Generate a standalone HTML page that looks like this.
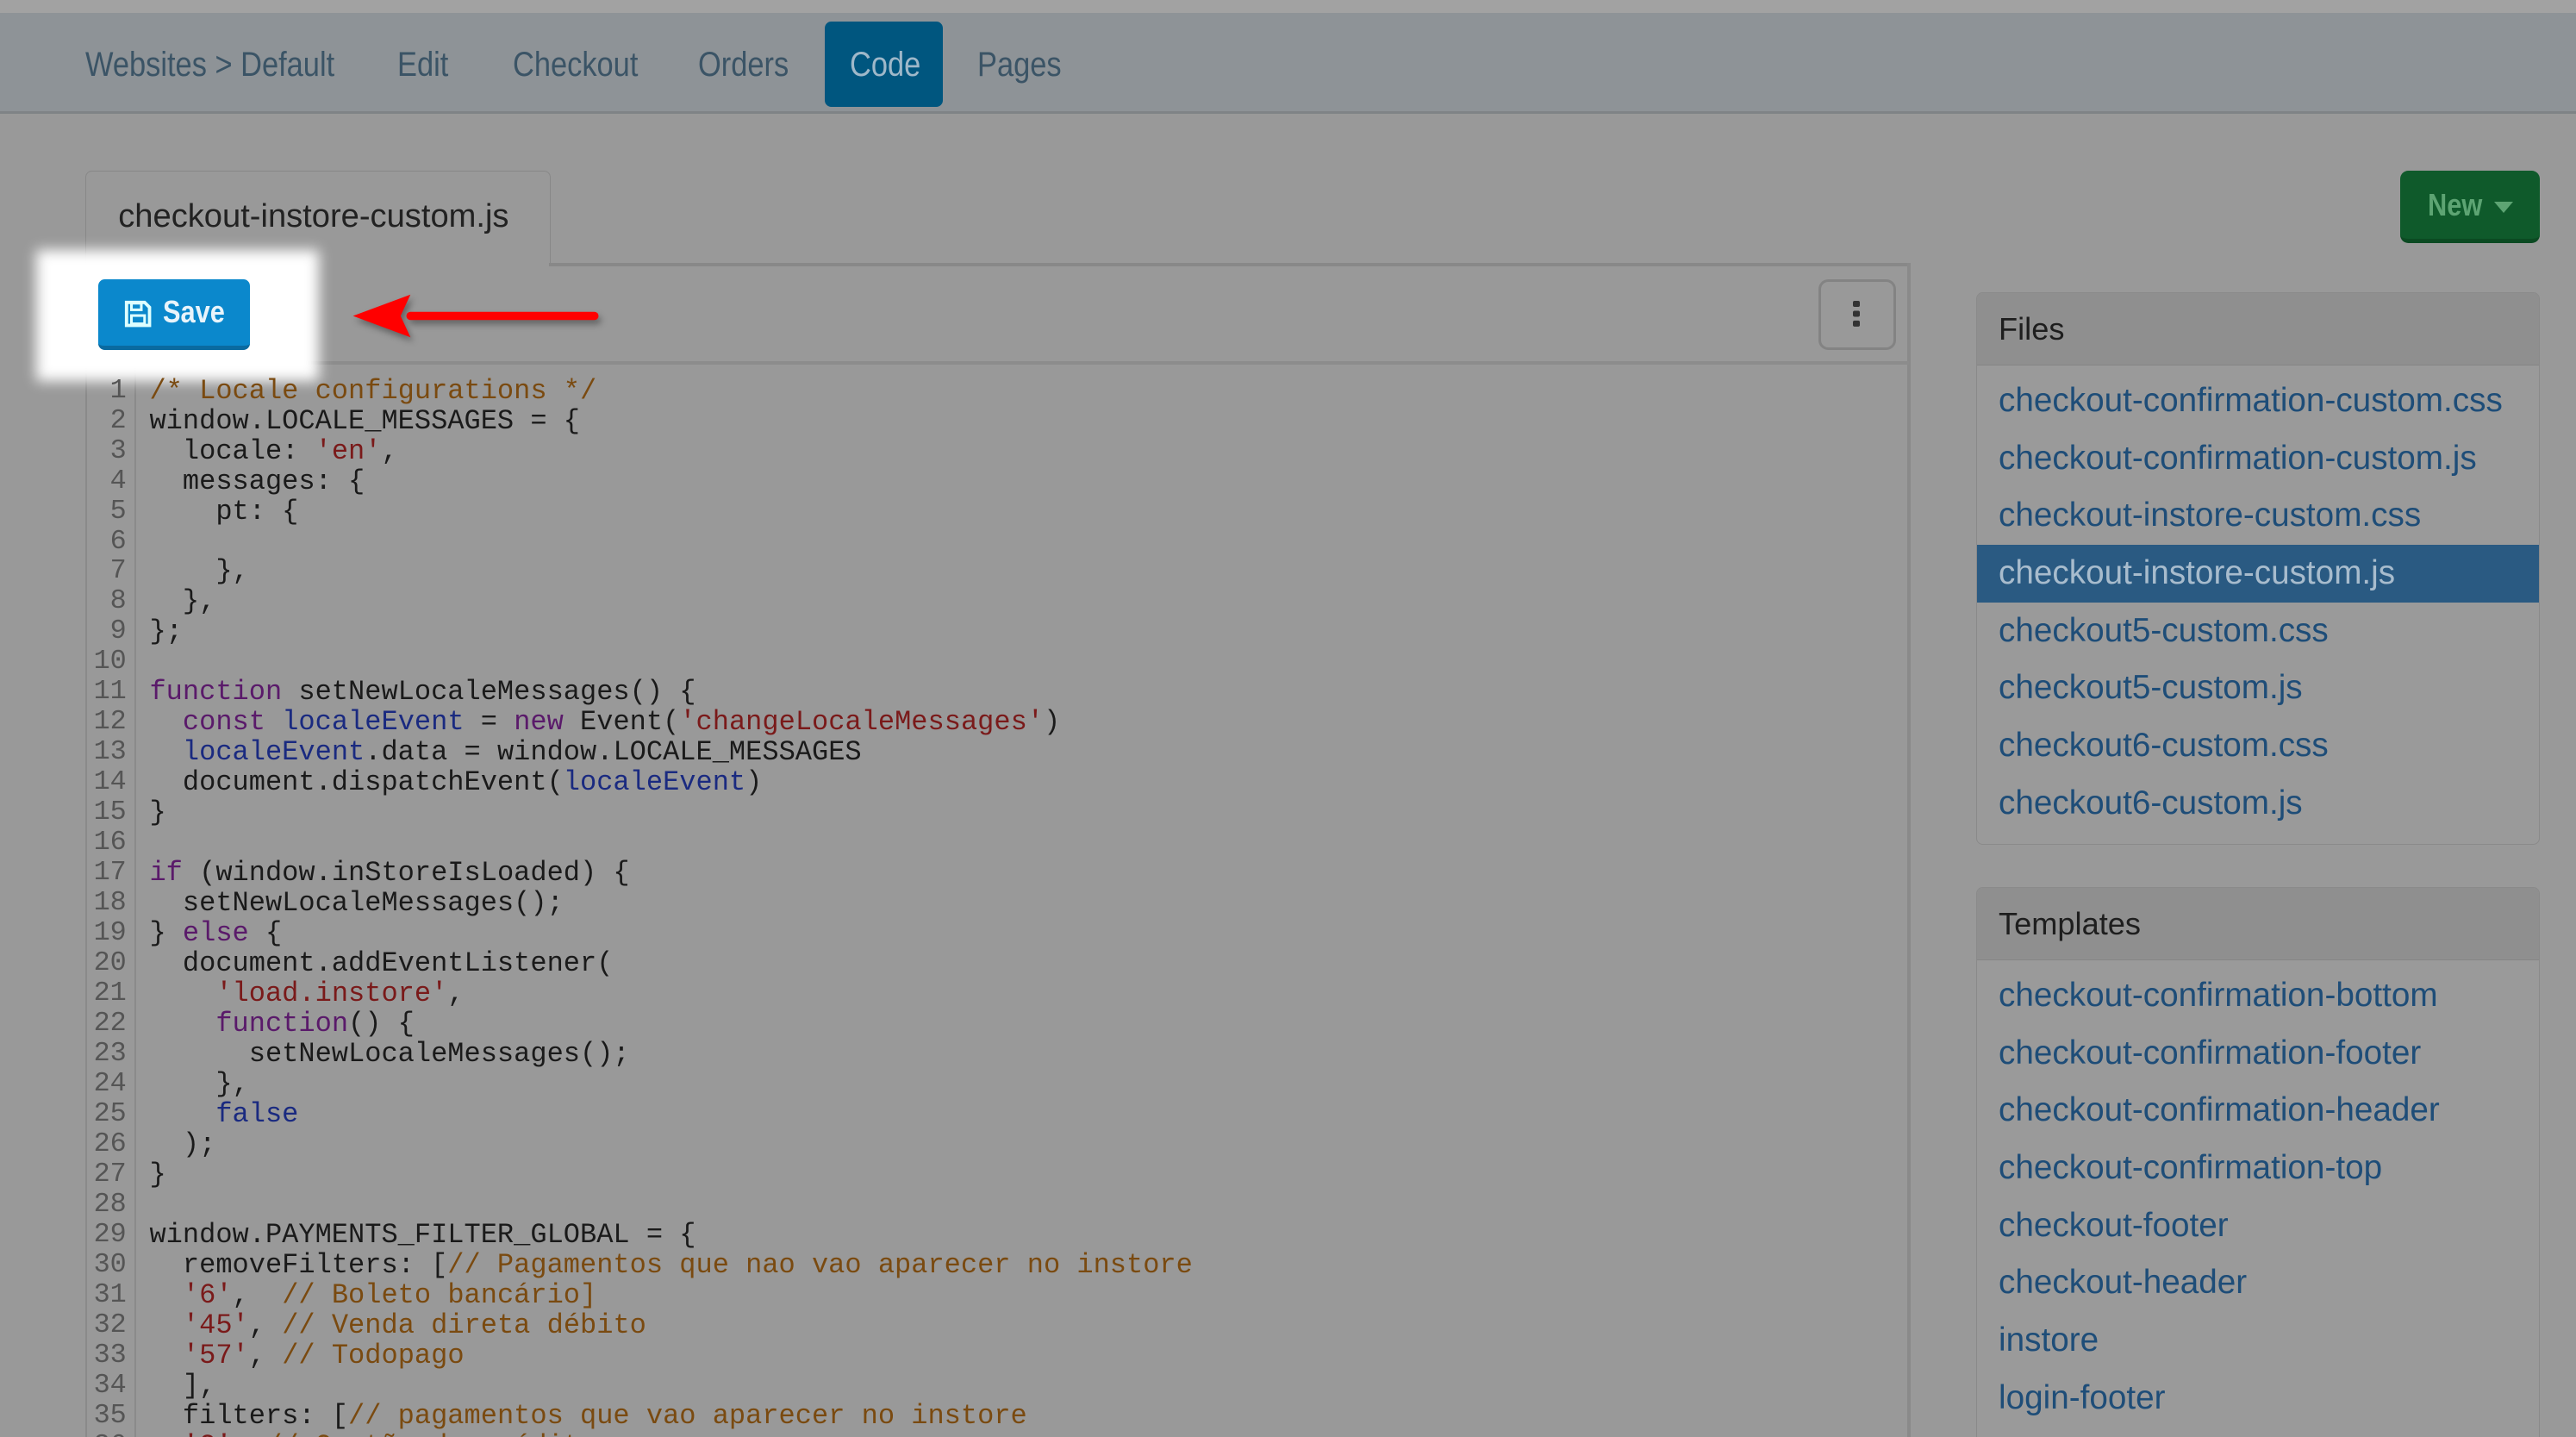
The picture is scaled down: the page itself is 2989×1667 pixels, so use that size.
<!DOCTYPE html>
<html><head><meta charset="utf-8">
<style>
*{margin:0;padding:0;box-sizing:border-box}
html,body{width:2989px;height:1667px;overflow:hidden;background:#999}
#w{zoom:1.90625;width:1568px;height:875px;position:relative;background:#999;font-family:"Liberation Sans",sans-serif;overflow:hidden}
.a{position:absolute}
.nav{left:0;top:8px;width:1568px;height:61px;background:#8e9397;border-bottom:2px solid #7f8386}
.ni{top:9px;height:61px;line-height:61px;font-size:21px;color:#3b5466;transform-origin:left center;transform:scaleX(.86);white-space:nowrap}
.code{font-family:"Liberation Mono",monospace;font-size:16.8px;line-height:18.35px;white-space:pre;color:#1a1a1a}
.c{color:#7a4a10}.s{color:#7a1a1a}.k{color:#5a1a6a}.v{color:#1a2a80}
.ln{font-family:"Liberation Mono",monospace;font-size:16.7px;line-height:18.35px;color:#555;text-align:right;width:26px;white-space:pre}
.panel{left:1203px;width:343px;border:1px solid #8a8a8a;border-radius:4px;background:#9a9a9a;overflow:hidden}
.ph{height:44px;background:#8f8f8f;border-bottom:1px solid #858585;font-size:19px;line-height:44px;padding-left:13px;color:#1e1e1e}
.pr{height:35px;line-height:35px;font-size:20.3px;padding-left:13px;color:#1e4d78;white-space:nowrap}
.first{margin-top:4px}
.sel{background:#2a5a82;color:#a8bccd}
</style></head><body><div id="w">
<div class="a" style="left:0;top:0;width:1568px;height:8px;background:#a2a2a2"></div>
<div class="a nav"></div>
<div class="a" style="left:502px;top:13px;width:72px;height:52px;background:#00567f;border-radius:4px"></div>
<div class="a ni" style="left:52px">Websites &gt; Default</div>
<div class="a ni" style="left:242px">Edit</div>
<div class="a ni" style="left:312px">Checkout</div>
<div class="a ni" style="left:425px">Orders</div>
<div class="a ni" style="left:517px;color:#9fb8c9">Code</div>
<div class="a ni" style="left:595px">Pages</div>

<div class="a" style="left:52px;top:104px;width:283px;height:58px;border:1px solid #888;border-bottom:none;border-radius:4px 4px 0 0;background:#999"></div>
<div class="a" style="left:72px;top:120px;font-size:20px;color:#222;white-space:nowrap">checkout-instore-custom.js</div>
<div class="a" style="left:334px;top:160px;width:829px;height:2px;background:#888"></div>
<div class="a" style="left:1161px;top:160px;width:2px;height:720px;background:#8a8a8a"></div>
<div class="a" style="left:52px;top:161px;width:1px;height:720px;background:#8a8a8a"></div>
<div class="a" style="left:52px;top:220px;width:1110px;height:2px;background:#8c8c8c"></div>
<div class="a" style="left:82px;top:222px;width:1px;height:660px;background:#8a8a8a"></div>

<div class="a" style="left:22px;top:152px;width:172px;height:80px;background:#fff;filter:blur(4px)"></div>
<div class="a" style="left:60px;top:170px;width:92px;height:43px;background:#0b88cc;border-radius:4px;border-bottom:3px solid #0a6aa0"></div>
<svg class="a" style="left:75px;top:182px" width="18" height="18" viewBox="0 0 18 18"><path d="M2 2h11l3 3v11H2z" fill="none" stroke="#dff" stroke-width="2"/><rect x="5" y="2.5" width="6" height="4" fill="none" stroke="#dff" stroke-width="1.6"/><rect x="5" y="10" width="8" height="5" fill="none" stroke="#dff" stroke-width="1.6"/></svg>
<div class="a" style="left:99px;top:179px;font-size:19px;font-weight:bold;color:#e8f4fb;transform:scaleX(.85);transform-origin:left">Save</div>
<svg class="a" style="left:210px;top:176px;filter:drop-shadow(2px 3px 2px rgba(0,0,0,.35))" width="160" height="34" viewBox="0 0 160 34"><path d="M152 16H40" stroke="#f00" stroke-width="5" stroke-linecap="round"/><path d="M5 16L40 3L34 16L40 29z" fill="#f00"/></svg>

<div class="a" style="left:1107px;top:170px;width:47px;height:43px;border:2px solid #838383;border-radius:6px"></div>
<div class="a" style="left:1128px;top:183px;width:4px;height:4px;background:#333;border-radius:1px;box-shadow:0 6px 0 #333,0 12px 0 #333"></div>

<div class="a ln" style="left:51px;top:228.5px">1
2
3
4
5
6
7
8
9
10
11
12
13
14
15
16
17
18
19
20
21
22
23
24
25
26
27
28
29
30
31
32
33
34
35
36</div>
<div class="a code" style="left:91px;top:228.5px"><span class="c">/* Locale configurations */</span>
window.LOCALE_MESSAGES = {
  locale: <span class="s">'en'</span>,
  messages: {
    pt: {

    },
  },
};

<span class="k">function</span> setNewLocaleMessages() {
  <span class="k">const</span> <span class="v">localeEvent</span> = <span class="k">new</span> Event(<span class="s">'changeLocaleMessages'</span>)
  <span class="v">localeEvent</span>.data = window.LOCALE_MESSAGES
  document.dispatchEvent(<span class="v">localeEvent</span>)
}

<span class="k">if</span> (window.inStoreIsLoaded) {
  setNewLocaleMessages();
} <span class="k">else</span> {
  document.addEventListener(
    <span class="s">'load.instore'</span>,
    <span class="k">function</span>() {
      setNewLocaleMessages();
    },
    <span class="v">false</span>
  );
}

window.PAYMENTS_FILTER_GLOBAL = {
  removeFilters: [<span class="c">// Pagamentos que nao vao aparecer no instore</span>
  <span class="s">'6'</span>,  <span class="c">// Boleto bancário]</span>
  <span class="s">'45'</span>, <span class="c">// Venda direta débito</span>
  <span class="s">'57'</span>, <span class="c">// Todopago</span>
  ],
  filters: [<span class="c">// pagamentos que vao aparecer no instore</span>
  <span class="s">'2'</span>, <span class="c">// Cartão de crédito</span></div>

<div class="a" style="left:1461px;top:104px;width:85px;height:44px;background:#0f5a2b;border-radius:5px;border-bottom:3px solid #0b4a22"></div>
<div class="a" style="left:1478px;top:114px;font-size:19px;font-weight:bold;color:#5da473;transform:scaleX(.85);transform-origin:left">New</div>
<div class="a" style="left:1518px;top:123px;width:0;height:0;border-left:6px solid transparent;border-right:6px solid transparent;border-top:7px solid #5da473"></div>

<div class="a panel" style="top:178px;height:336px">
<div class="ph">Files</div>
<div class="pr first">checkout-confirmation-custom.css</div>
<div class="pr">checkout-confirmation-custom.js</div>
<div class="pr">checkout-instore-custom.css</div>
<div class="pr sel">checkout-instore-custom.js</div>
<div class="pr">checkout5-custom.css</div>
<div class="pr">checkout5-custom.js</div>
<div class="pr">checkout6-custom.css</div>
<div class="pr">checkout6-custom.js</div>
</div>
<div class="a panel" style="top:540px;height:360px">
<div class="ph">Templates</div>
<div class="pr first">checkout-confirmation-bottom</div>
<div class="pr">checkout-confirmation-footer</div>
<div class="pr">checkout-confirmation-header</div>
<div class="pr">checkout-confirmation-top</div>
<div class="pr">checkout-footer</div>
<div class="pr">checkout-header</div>
<div class="pr">instore</div>
<div class="pr">login-footer</div>
</div>
</div></body></html>
